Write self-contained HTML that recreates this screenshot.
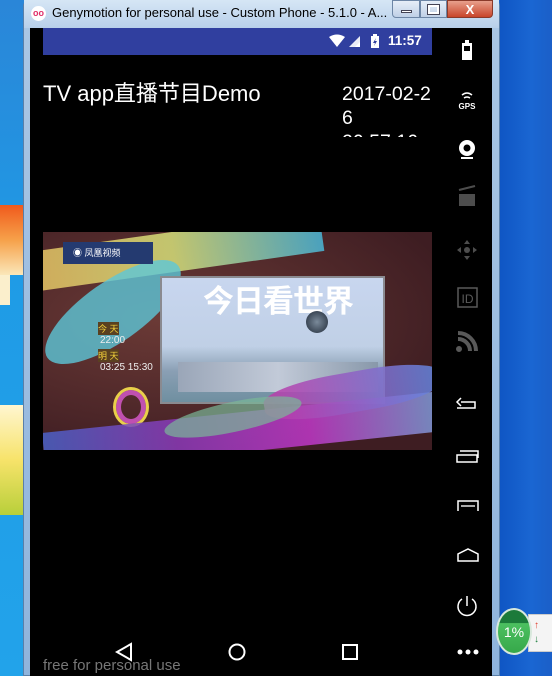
<!DOCTYPE html>
<html><head><meta charset="utf-8"><style>
*{margin:0;padding:0;box-sizing:border-box}
body{width:552px;height:676px;overflow:hidden;position:relative;background:#1a63c8;font-family:"Liberation Sans","Noto Sans CJK SC",sans-serif}
.abs{position:absolute}
</style></head><body>
<div class="abs" style="left:0;top:0;width:24px;height:676px;background:linear-gradient(180deg,#2a86d8 0%,#1f9be6 40%,#22a3ea 100%)"></div>
<div class="abs" style="left:0;top:205px;width:24px;height:70px;background:linear-gradient(180deg,#f05a1c,#f6a14a,#fbe7b9);"></div>
<div class="abs" style="left:0;top:275px;width:10px;height:30px;background:#fbefcc"></div>
<div class="abs" style="left:0;top:405px;width:24px;height:110px;background:linear-gradient(180deg,#fff6d0,#f7e36a,#b8cf3a)"></div>
<div class="abs" style="left:500px;top:0;width:52px;height:676px;background:linear-gradient(90deg,#0f56c4,#1a66d2 60%,#1b5fc8)"></div>
<div class="abs" style="left:23px;top:0;width:477px;height:676px;background:linear-gradient(180deg,#bcd3ea 0,#a9c6e4 28px,#8fb4dc 100%);border:1px solid #5a7fa8;border-radius:6px 6px 0 0"></div>
<div class="abs" style="left:24px;top:0;width:475px;height:28px;background:linear-gradient(180deg,#d6e6f5,#b8d0ea)"></div>
<div class="abs" style="left:31px;top:6px;width:15px;height:15px;border-radius:50%;background:#fff;color:#e0306a;font-size:9px;font-weight:bold;line-height:15px;text-align:center">oo</div>
<div class="abs" style="left:52px;top:5px;font-size:13px;color:#000;white-space:nowrap">Genymotion for personal use - Custom Phone - 5.1.0 - A...</div>
<div class="abs" style="left:392px;top:0;width:28px;height:18px;border:1px solid #6d86a6;border-radius:0 0 0 4px;background:linear-gradient(#e6eef8,#bfd0e6)"><div style="margin:9px auto 0;width:11px;height:3px;background:#fff;border:1px solid #445"></div></div>
<div class="abs" style="left:420px;top:0;width:27px;height:18px;border:1px solid #6d86a6;background:linear-gradient(#e6eef8,#bfd0e6)"><div style="margin:4px auto 0;width:11px;height:9px;border:2px solid #fff;outline:1px solid #445"></div></div>
<div class="abs" style="left:447px;top:0;width:46px;height:18px;border:1px solid #8a3a2a;border-radius:0 0 4px 0;background:linear-gradient(#e8a08c,#c8452a);color:#fff;font-weight:bold;font-size:13px;text-align:center;line-height:17px">X</div>
<div class="abs" style="left:30px;top:28px;width:462px;height:648px;background:#000"></div>
<div class="abs" style="left:43px;top:28px;width:389px;height:27px;background:#303f9f"></div>
<svg class="abs" style="left:328px;top:34px" width="100" height="16">
<path d="M1 3 Q9 -2 17 3 L9 13 Z" fill="#fff"/>
<path d="M21 13 L32 2 L32 13 Z" fill="#fff" opacity=".9"/>
<path d="M27 13 L32 8 L32 13Z" fill="#fff"/>
<rect x="43" y="2" width="8" height="12" fill="#fff"/><rect x="45" y="0" width="4" height="2" fill="#fff"/>
<path d="M48 4 L45 9 L47 9 L46 12 L49 7 L47 7Z" fill="#303f9f"/>
</svg>
<div class="abs" style="left:388px;top:33px;color:#fff;font-size:13.5px;font-weight:bold">11:57</div>
<div class="abs" style="left:43px;top:76px;color:#fff;font-size:22px;white-space:nowrap">TV app直播节目Demo</div>
<div class="abs" style="left:342px;top:82px;width:95px;height:55px;overflow:hidden;color:#fff;font-size:19.5px;line-height:24px">2017-02-2<br>6<br>20:57:16</div>
<div class="abs" style="left:43px;top:232px;width:389px;height:218px;overflow:hidden;background:#4a2326">
<div class="abs" style="left:0;top:0;width:389px;height:218px;background:radial-gradient(ellipse at 30% 40%,#6b3a36,#3e1d22 80%)"></div>
<div class="abs" style="left:-20px;top:0;width:300px;height:40px;background:linear-gradient(90deg,#e6c062,#d6e07a,#4ab7d8);transform:rotate(-8deg);opacity:.85"></div>
<div class="abs" style="left:-10px;top:50px;width:160px;height:60px;background:#5cc7d8;transform:rotate(-35deg);border-radius:50%;opacity:.8"></div>
<div class="abs" style="left:20px;top:10px;width:90px;height:22px;background:#243a70"></div>
<div class="abs" style="left:30px;top:14px;color:#fff;font-size:9px">◉ 凤凰视频</div>
<div class="abs" style="left:117px;top:44px;width:225px;height:128px;background:linear-gradient(180deg,#c8d6ef,#c0d0e6 55%,#8a9fb4 75%,#6f8fa0);border:2px solid #8a8a90"></div>
<div class="abs" style="left:135px;top:130px;width:200px;height:30px;background:linear-gradient(90deg,#9aa6b8,#c2cad8,#8898aa)"></div>
<div class="abs" style="left:160px;top:44px;color:#fff;font-size:31px;font-weight:bold;letter-spacing:-1px">今日看世界</div>
<div class="abs" style="left:263px;top:79px;width:22px;height:22px;border-radius:50%;background:radial-gradient(#7a8a9a,#202a38)"></div>
<div class="abs" style="left:55px;top:90px;color:#f4d23a;font-size:9px;background:#5a4020">今 天</div>
<div class="abs" style="left:57px;top:103px;color:#eee;font-size:10px">22:00</div>
<div class="abs" style="left:55px;top:117px;color:#f4d23a;font-size:9px;background:#5a4020">明 天</div>
<div class="abs" style="left:57px;top:130px;color:#eee;font-size:10px">03:25 15:30</div>
<div class="abs" style="left:70px;top:155px;width:36px;height:40px;border-radius:50%;border:3px solid #e8d04a;box-shadow:inset 0 0 0 5px #c050b0"></div>
<div class="abs" style="left:0;top:180px;width:400px;height:40px;background:linear-gradient(90deg,#4a62c8,#8a3ab8,#c038c8,#7aa0d8);transform:rotate(-6deg);opacity:.85"></div>
<div class="abs" style="left:220px;top:140px;width:180px;height:40px;background:linear-gradient(90deg,#c038a8,#6088e0);border-radius:40%;transform:rotate(-10deg);opacity:.85"></div>
<div class="abs" style="left:120px;top:170px;width:140px;height:30px;background:#7ab898;border-radius:50%;transform:rotate(-12deg);opacity:.7"></div>
</div>
<svg class="abs" style="left:100px;top:640px" width="270" height="26" fill="none" stroke="#fff" stroke-width="2">
<path d="M31 4 L17 12 L31 20 Z"/>
<circle cx="137" cy="12" r="7.5"/>
<rect x="243" y="5" width="14" height="14"/>
</svg>
<div class="abs" style="left:43px;top:657px;color:#777;font-size:15px;white-space:nowrap">free for personal use</div>
<svg class="abs" style="left:448px;top:36px" width="40" height="632" fill="none" stroke="#fff" stroke-width="2">
<rect x="14" y="7" width="10" height="17" fill="#fff" stroke="none"/><rect x="17" y="4" width="4" height="3" fill="#fff" stroke="none"/><rect x="16" y="10" width="6" height="5" fill="#000" stroke="none"/>
<path d="M14 59 Q19 55 24 59 M16 62 Q19 60 22 62" stroke-width="1.5"/>
<text x="19" y="73" font-size="8" font-weight="bold" fill="#fff" stroke="none" text-anchor="middle" font-family="Liberation Sans">GPS</text>
<circle cx="19" cy="112" r="8" fill="#fff" stroke="none"/><circle cx="19" cy="112" r="3.5" fill="#000" stroke="none"/><rect x="13" y="121" width="12" height="2" fill="#fff" stroke="none"/>
<g opacity=".3"><rect x="11" y="158" width="16" height="12" fill="#fff" stroke="none"/><path d="M11 154 L27 150" /></g>
<g opacity=".3" fill="#fff" stroke="none"><circle cx="19" cy="214" r="3"/><path d="M19 204 l3 4 h-6z M19 224 l3 -4 h-6z M9 214 l4 3 v-6z M29 214 l-4 3 v-6z"/></g>
<g opacity=".35"><rect x="10" y="252" width="19" height="19" stroke-width="1.5"/><text x="19.5" y="267" font-size="12" fill="#fff" stroke="none" text-anchor="middle" font-family="Liberation Sans">ID</text></g>
<g opacity=".35"><path d="M10 303 A12 12 0 0 1 22 315 M10 297 A18 18 0 0 1 28 315" stroke-width="4"/><circle cx="11" cy="313" r="2" fill="#fff"/></g>
<path d="M13 366 h14 v6 h-18 M13 362 l-4 4 l4 4" stroke-width="1.5"/>
<rect x="9" y="419" width="20" height="7" stroke-width="1.5"/><path d="M12 415 h18 v7" stroke-width="1.5"/>
<path d="M10 475 v-10 h20 v10" stroke-width="1.5"/><path d="M13 470 h14" stroke="#aaa" stroke-width="2"/>
<path d="M10 525 v-7 l10 -5 l10 5 v7 z" stroke-width="1.5"/>
<path d="M19 560 v10" stroke-width="1.5"/><path d="M14 563 A9 9 0 1 0 24 563" stroke-width="1.5"/>
<circle cx="12" cy="616" r="2.5" fill="#fff" stroke="none"/><circle cx="20" cy="616" r="2.5" fill="#fff" stroke="none"/><circle cx="28" cy="616" r="2.5" fill="#fff" stroke="none"/>
</svg>
<div class="abs" style="left:528px;top:614px;width:30px;height:38px;background:#f4f4f4;border:1px solid #ccc"></div>
<div class="abs" style="left:534px;top:620px;color:#e04030;font-size:10px">↑</div>
<div class="abs" style="left:534px;top:634px;color:#208040;font-size:10px">↓</div>
<div class="abs" style="left:496px;top:608px;width:36px;height:47px;border-radius:50%;background:linear-gradient(180deg,#1c7a3a 0,#1c7a3a 30%,#4cc060 31%,#36a84a);border:2px solid #d8e8dc;color:#fff;font-size:14px;line-height:44px;text-align:center">1%</div>
</body></html>
